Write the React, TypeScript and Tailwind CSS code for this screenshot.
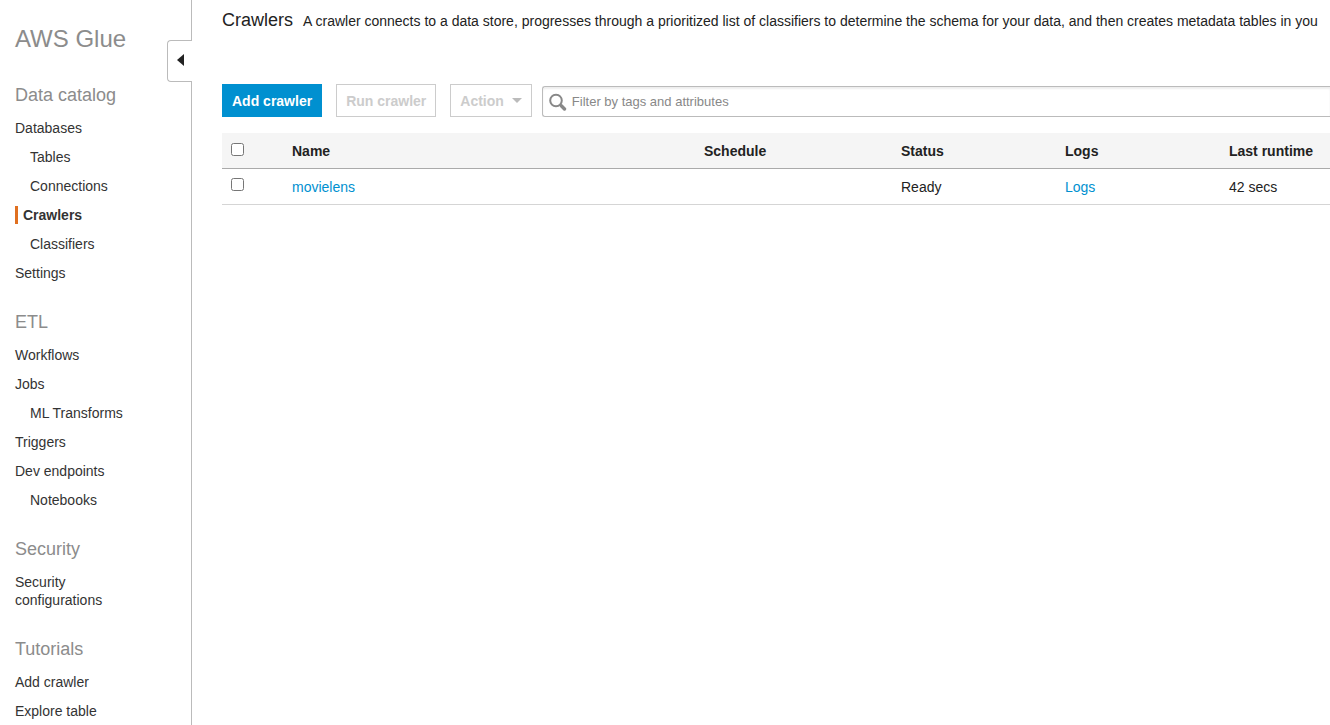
type NavItem = { label: string; nested?: boolean; current?: boolean };
type NavSection = { title: string; items: NavItem[] };

const sections: NavSection[] = [
  {
    title: "Data catalog",
    items: [
      { label: "Databases" },
      { label: "Tables", nested: true },
      { label: "Connections", nested: true },
      { label: "Crawlers", current: true },
      { label: "Classifiers", nested: true },
      { label: "Settings" },
    ],
  },
  {
    title: "ETL",
    items: [
      { label: "Workflows" },
      { label: "Jobs" },
      { label: "ML Transforms", nested: true },
      { label: "Triggers" },
      { label: "Dev endpoints" },
      { label: "Notebooks", nested: true },
    ],
  },
  { title: "Security", items: [{ label: "Security configurations" }] },
  { title: "Tutorials", items: [{ label: "Add crawler" }, { label: "Explore table" }] },
];

const crawlers = [{ name: "movielens", schedule: "", status: "Ready", runtime: "42 secs" }];

function itemClass(item: NavItem) {
  if (item.current) return "block border-l-3 border-[#e07020] pl-[5px] font-bold";
  return item.nested ? "block pl-[15px]" : "block";
}

function Sidebar() {
  return (
    <aside className="relative w-48 shrink-0 border-r border-[#bbb] pl-[15px] pr-16 pt-[25px] text-[#333]">
      <h1 className="whitespace-nowrap text-2xl leading-7 text-[#8c8c8c]">AWS Glue</h1>
      <nav className="mt-[31px] flex flex-col gap-[29px]" aria-label="AWS Glue">
        {sections.map((section) => (
          <section key={section.title}>
            <h2 className="whitespace-nowrap text-lg leading-[22px] text-[#8c8c8c]">{section.title}</h2>
            <ul className="mt-[13px] flex flex-col gap-[11px]">
              {section.items.map((item) => (
                <li key={item.label}>
                  <a
                    href="#"
                    className={itemClass(item)}
                    aria-current={item.current ? "page" : undefined}
                  >
                    {item.label}
                  </a>
                </li>
              ))}
            </ul>
          </section>
        ))}
      </nav>
      <button
        type="button"
        aria-label="Collapse navigation"
        className="absolute -right-px top-10 flex h-[42px] w-[25px] items-center rounded-l border-y border-l border-[#bbb] bg-white pb-[2px] pl-[9px]"
      >
        <svg width="7" height="12" viewBox="0 0 7 12" fill="#222" aria-hidden="true">
          <path d="M7 0v12L0 6z" />
        </svg>
      </button>
    </aside>
  );
}

function Toolbar() {
  return (
    <div className="mt-[53px] flex items-end">
      <button
        type="button"
        className="h-[33px] shrink-0 border border-[#0090d0] bg-[#0090d0] px-[9px] font-bold text-white"
      >
        Add crawler
      </button>
      <button
        type="button"
        disabled
        className="ml-[14px] h-[33px] shrink-0 border border-[#ccc] px-[9px] font-bold text-[#ccc]"
      >
        Run crawler
      </button>
      <button
        type="button"
        disabled
        className="ml-[14px] flex h-[33px] shrink-0 items-center gap-2 border border-[#ccc] px-[9px] font-bold text-[#ccc]"
      >
        Action
        <svg width="10" height="5" viewBox="0 0 10 5" fill="#bbb" aria-hidden="true">
          <path d="M0 0h10L5 5z" />
        </svg>
      </button>
      <label className="ml-[10px] flex h-[31px] min-w-0 grow items-center rounded-l-[3px] border-y border-l border-[#bbb] pl-[6px] shadow-[inset_0_2px_2px_#eee]">
        <svg width="18" height="18" viewBox="0 0 18 18" fill="none" stroke="#888" aria-hidden="true">
          <circle cx="7" cy="7.5" r="5.8" strokeWidth="2" />
          <path d="M11 11.5l1.5 1.5" strokeWidth="2" />
          <path d="M12.3 12.8l3.2 3.2" strokeWidth="3.4" strokeLinecap="round" />
        </svg>
        <input
          type="text"
          aria-label="Filter crawlers"
          placeholder="Filter by tags and attributes"
          className="ml-[5px] min-w-0 grow bg-transparent text-[13px] outline-none placeholder:text-[#888]"
        />
      </label>
    </div>
  );
}

function CrawlerTable() {
  return (
    <table className="mt-4 w-full table-fixed border-separate border-spacing-0 text-left">
      <thead className="bg-[#f5f5f5] [&_th]:border-b [&_th]:border-[#aaa]">
        <tr className="h-9">
          <th className="w-[60px] pl-[9px] pt-[10px] align-top">
            <input type="checkbox" aria-label="Select all crawlers" className="block size-[13px]" />
          </th>
          <th className="pl-[10px]">Name</th>
          <th className="w-[197px] pl-[10px]">Schedule</th>
          <th className="w-[164px] pl-[10px]">Status</th>
          <th className="w-[164px] pl-[10px]">Logs</th>
          <th className="w-[111px] whitespace-nowrap pl-[10px]">Last runtime</th>
        </tr>
      </thead>
      <tbody className="[&_td]:border-b [&_td]:border-[#d5d5d5]">
        {crawlers.map((crawler) => (
          <tr key={crawler.name} className="h-9">
            <td className="pl-[9px] pt-[9px] align-top">
              <input type="checkbox" aria-label={`Select ${crawler.name}`} className="block size-[13px]" />
            </td>
            <td className="pl-[10px]">
              <a href="#" className="text-[#0090d0]">{crawler.name}</a>
            </td>
            <td className="pl-[10px]">{crawler.schedule}</td>
            <td className="pl-[10px]">{crawler.status}</td>
            <td className="pl-[10px]">
              <a href="#" className="text-[#0090d0]">Logs</a>
            </td>
            <td className="pl-[10px]">{crawler.runtime}</td>
          </tr>
        ))}
      </tbody>
    </table>
  );
}

export default function App() {
  return (
    <div className="flex min-h-screen bg-white font-['Liberation_Sans',Arial,sans-serif] text-[14px] leading-[18px] text-[#222]">
      <Sidebar />
      <main className="min-w-0 grow overflow-hidden pl-[30px] pt-[9px]">
        <header className="flex items-baseline gap-[10px] whitespace-nowrap">
          <h2 className="text-lg leading-[22px]">Crawlers</h2>
          <p>
            A crawler connects to a data store, progresses through a prioritized list of classifiers to determine the
            schema for your data, and then creates metadata tables in you
          </p>
        </header>
        <Toolbar />
        <CrawlerTable />
      </main>
    </div>
  );
}
